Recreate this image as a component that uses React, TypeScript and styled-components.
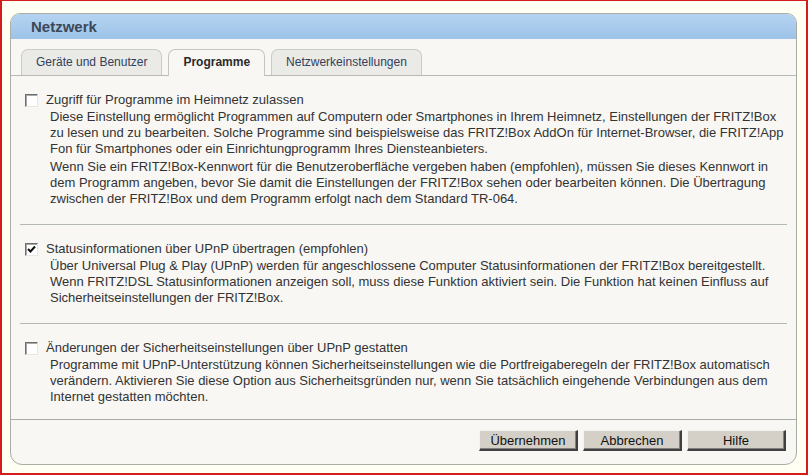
import React from "react";
import styled, { createGlobalStyle } from "styled-components";

const Global = createGlobalStyle`
  html, body { margin: 0; padding: 0; }
  body { font-family: "Liberation Sans", Arial, sans-serif; }
`;

const Frame = styled.div`
  width: 808px;
  height: 475px;
  box-sizing: border-box;
  border: 2px solid #d41c1c;
  border-top-width: 1px;
  background: #fffff3;
  padding: 12px 9px 0 8px;
`;

const Panel = styled.div`
  width: 787px;
  box-sizing: border-box;
  border: 1px solid #a6aea6;
  border-radius: 10px 10px 12px 12px;
  background: #f8f7f3;
  overflow: hidden;
`;

const Header = styled.div`
  height: 25px;
  background: linear-gradient(#b5d3f1, #9dc3e8);
  color: #3b4858;
  font-weight: bold;
  font-size: 15px;
  line-height: 25px;
  padding-left: 20px;
`;

const TabBar = styled.div`
  display: flex;
  gap: 6px;
  margin-top: 10px;
  padding-left: 10px;
  border-bottom: 1px solid #b9bab4;
  height: 26px;
`;

const Tab = styled.div<{ $active?: boolean }>`
  height: 26px;
  box-sizing: border-box;
  padding: 0 14px;
  border: 1px solid ${(p) => (p.$active ? "#c4c5bf" : "#cacbc6")};
  border-bottom: none;
  border-radius: 7px 7px 0 0;
  background: ${(p) => (p.$active ? "#f8f7f3" : "#eaeae7")};
  color: ${(p) => (p.$active ? "#2b2b2b" : "#33415a")};
  font-size: 12px;
  font-weight: ${(p) => (p.$active ? "bold" : "normal")};
  line-height: 25px;
  margin-bottom: ${(p) => (p.$active ? "-1px" : "0")};
  height: ${(p) => (p.$active ? "27px" : "26px")};
`;

const Sections = styled.div`
  margin: 0 9px 0 9px;
`;

const Section = styled.div<{ $last?: boolean }>`
  padding: 16px 0 ${(p) => (p.$last ? "12px" : "15px")} 5px;
  border-bottom: ${(p) => (p.$last ? "none" : "1px solid #b3b8b0")};
`;

const LabelRow = styled.label`
  display: flex;
  align-items: center;
  gap: 8px;
  font-size: 13px;
  line-height: 16px;
  color: #333;
  margin-bottom: 1px;
`;

const Box = styled.span`
  width: 13px;
  height: 13px;
  box-sizing: border-box;
  border-top: 1px solid #6d6d6d;
  border-left: 1px solid #6d6d6d;
  border-right: 1px solid #e6e6e6;
  border-bottom: 1px solid #e6e6e6;
  background: #fff;
  box-shadow: inset 1px 1px 0 #a8a8a8;
  display: flex;
  align-items: center;
  justify-content: center;
  flex: none;
`;

const Desc = styled.div`
  margin-left: 25px;
  font-size: 13px;
  line-height: 16px;
  color: #333;
  white-space: nowrap;
`;

const Para = styled.p`
  margin: 0 0 2px 0;
`;

const ButtonBar = styled.div`
  border-top: 1px solid #a6aea6;
  display: flex;
  justify-content: flex-end;
  gap: 5px;
  padding: 10px 10px 13px 0;
`;

const Button = styled.button`
  width: 99px;
  height: 21px;
  box-sizing: border-box;
  background: #d4d0c8;
  border-top: 1px solid #f4f3ef;
  border-left: 1px solid #f4f3ef;
  border-right: 2px solid #404040;
  border-bottom: 2px solid #404040;
  box-shadow: inset -1px -1px 0 #808080;
  font-family: "Liberation Sans", Arial, sans-serif;
  font-size: 13px;
  color: #111;
  padding: 0;
  line-height: 17px;
`;

const Check = ({ checked }: { checked?: boolean }) => (
  <Box>
    {checked && (
      <svg width="9" height="9" viewBox="0 0 9 9">
        <path d="M1 4 L3.5 6.5 L8 1.5" fill="none" stroke="#111" strokeWidth="2" />
      </svg>
    )}
  </Box>
);

export default function App() {
  return (
    <>
      <Global />
      <Frame>
        <Panel>
          <Header>Netzwerk</Header>
          <TabBar>
            <Tab>Geräte und Benutzer</Tab>
            <Tab $active>Programme</Tab>
            <Tab>Netzwerkeinstellungen</Tab>
          </TabBar>
          <Sections>
            <Section>
              <LabelRow>
                <Check />
                Zugriff für Programme im Heimnetz zulassen
              </LabelRow>
              <Desc>
                <Para>
                  Diese Einstellung ermöglicht Programmen auf Computern oder Smartphones in Ihrem Heimnetz, Einstellungen der FRITZ!Box
                  <br />
                  zu lesen und zu bearbeiten. Solche Programme sind beispielsweise das FRITZ!Box AddOn für Internet-Browser, die FRITZ!App
                  <br />
                  Fon für Smartphones oder ein Einrichtungprogramm Ihres Diensteanbieters.
                </Para>
                <Para>
                  Wenn Sie ein FRITZ!Box-Kennwort für die Benutzeroberfläche vergeben haben (empfohlen), müssen Sie dieses Kennwort in
                  <br />
                  dem Programm angeben, bevor Sie damit die Einstellungen der FRITZ!Box sehen oder bearbeiten können. Die Übertragung
                  <br />
                  zwischen der FRITZ!Box und dem Programm erfolgt nach dem Standard TR-064.
                </Para>
              </Desc>
            </Section>
            <Section>
              <LabelRow>
                <Check checked />
                Statusinformationen über UPnP übertragen (empfohlen)
              </LabelRow>
              <Desc>
                <Para>
                  Über Universal Plug &amp; Play (UPnP) werden für angeschlossene Computer Statusinformationen der FRITZ!Box bereitgestellt.
                  <br />
                  Wenn FRITZ!DSL Statusinformationen anzeigen soll, muss diese Funktion aktiviert sein. Die Funktion hat keinen Einfluss auf
                  <br />
                  Sicherheitseinstellungen der FRITZ!Box.
                </Para>
              </Desc>
            </Section>
            <Section $last>
              <LabelRow>
                <Check />
                Änderungen der Sicherheitseinstellungen über UPnP gestatten
              </LabelRow>
              <Desc>
                <Para>
                  Programme mit UPnP-Unterstützung können Sicherheitseinstellungen wie die Portfreigaberegeln der FRITZ!Box automatisch
                  <br />
                  verändern. Aktivieren Sie diese Option aus Sicherheitsgründen nur, wenn Sie tatsächlich eingehende Verbindungen aus dem
                  <br />
                  Internet gestatten möchten.
                </Para>
              </Desc>
            </Section>
          </Sections>
          <ButtonBar>
            <Button>Übernehmen</Button>
            <Button>Abbrechen</Button>
            <Button>Hilfe</Button>
          </ButtonBar>
        </Panel>
      </Frame>
    </>
  );
}
